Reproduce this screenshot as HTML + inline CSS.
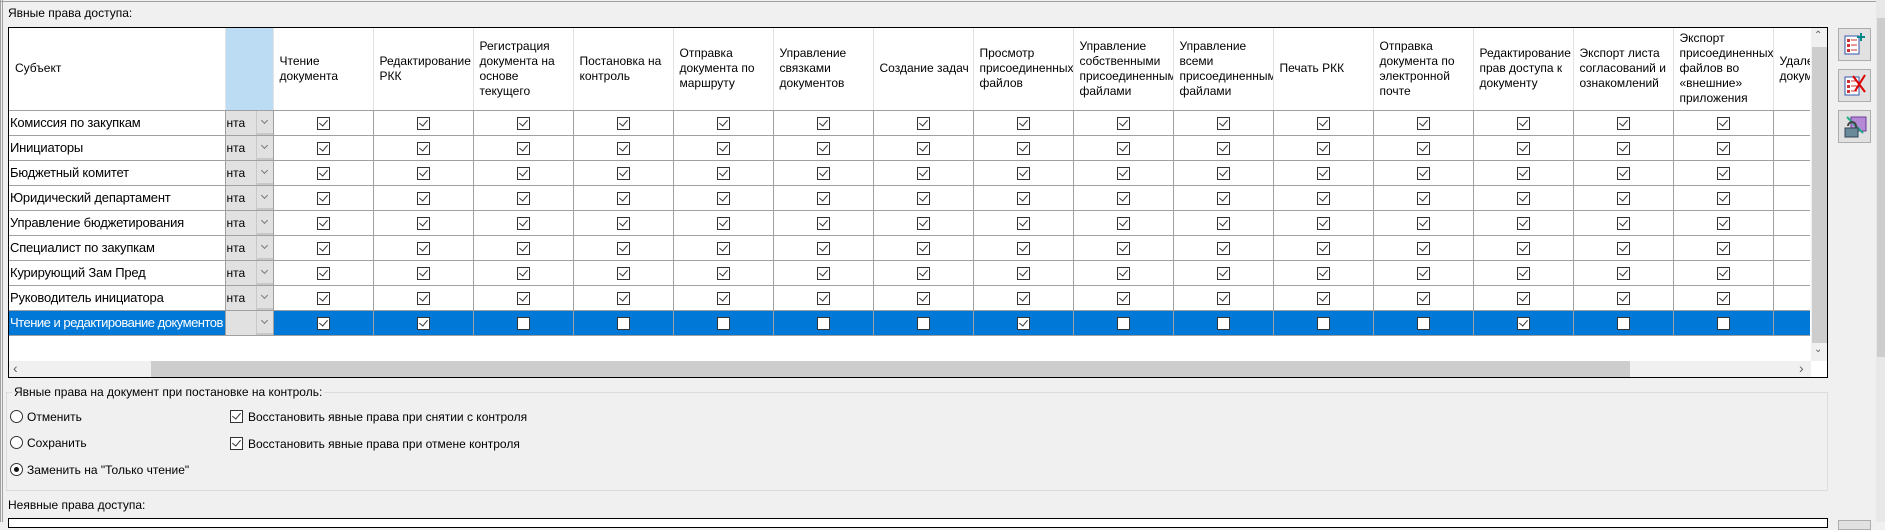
<!DOCTYPE html>
<html><head><meta charset="utf-8"><style>
*{box-sizing:border-box;margin:0;padding:0}
body{width:1885px;height:522px;background:#f0f0f0;font-family:"Liberation Sans",sans-serif;font-size:12px;color:#000;position:relative;overflow:hidden}
.abs{position:absolute}
.grid{position:absolute;left:9px;top:28px;width:1801px;height:333px;overflow:hidden;background:#fff}
table{border-collapse:collapse;table-layout:fixed;width:1816px}
th{height:82px;font-weight:normal;text-align:left;vertical-align:middle;border-right:1px solid #e3e3e3;border-bottom:1px solid #a0a0a0;padding:0 0 0 6px;line-height:15px;overflow:hidden;white-space:nowrap;font-size:12px}
td{height:25px;border-right:1px solid #a0a0a0;border-bottom:1px solid #a0a0a0;text-align:center;vertical-align:middle;padding:0}
td.s{text-align:left;padding-left:1px;white-space:nowrap;overflow:hidden;font-size:13px;letter-spacing:-0.2px}
td.c{background:#e1e1e1;text-align:left;padding:0;position:relative;border-right:1px solid #a0a0a0}
td.c span{position:absolute;left:1px;top:5px;font-size:12px;color:#000}
td.c i{position:absolute;left:30px;top:0;width:17px;height:24px;border-left:1px solid #c8c8c8;border-bottom:2px solid #c8c8c8}
td.c i:after{content:"";position:absolute;left:5px;top:7px;width:4px;height:4px;border-right:1px solid #777;border-bottom:1px solid #777;transform:rotate(45deg)}
.cb{display:inline-block;width:13px;height:13px;border:1px solid #333;background:#fff;vertical-align:middle;position:relative}
.cb.k:after{content:"";position:absolute;left:3px;top:0px;width:4px;height:7px;border-right:1px solid #333;border-bottom:1px solid #333;transform:rotate(40deg)}
tr.sel td{background:#0078d7;color:#fff}
tr.sel td.c{background:#e1e1e1}
tr.sel td.s{letter-spacing:-0.5px}
.btn{position:absolute;left:1838px;width:33px;height:33px;border:1px solid #adadad;background:#e1e1e1}
.radio{position:absolute;width:13px;height:13px;border:1px solid #333;border-radius:50%;background:#fff}
</style></head><body>
<div class="abs" style="left:0;top:0;width:3px;height:522px;border-left:1px solid #a0a0a0;border-right:1px solid #a0a0a0"></div>
<div class="abs" style="left:0;top:1px;width:1876px;height:1px;background:#a0a0a0"></div>
<div class="abs" style="left:8px;top:6px">Явные права доступа:</div>
<div class="abs" style="left:8px;top:27px;width:1820px;height:351px;border:1px solid #000;background:#fff"></div>
<div class="grid"><table>
<colgroup><col style="width:216px"><col style="width:48px"><col span="16" style="width:100px"></colgroup>
<tr><th>Субъект</th><th style="background:#bcdcf4"></th>
<th>Чтение<br>документа</th><th>Редактирование<br>РКК</th><th>Регистрация<br>документа на<br>основе<br>текущего</th><th>Постановка на<br>контроль</th><th>Отправка<br>документа по<br>маршруту</th><th>Управление<br>связками<br>документов</th><th>Создание задач</th><th>Просмотр<br>присоединенных<br>файлов</th><th>Управление<br>собственными<br>присоединенными<br>файлами</th><th>Управление<br>всеми<br>присоединенными<br>файлами</th><th>Печать РКК</th><th>Отправка<br>документа по<br>электронной<br>почте</th><th>Редактирование<br>прав доступа к<br>документу</th><th>Экспорт листа<br>согласований и<br>ознакомлений</th><th>Экспорт<br>присоединенных<br>файлов во<br>«внешние»<br>приложения</th><th>Удаление<br>документа</th></tr>
<tr><td class="s">Комиссия по закупкам</td><td class="c"><span>нта</span><i></i></td><td><b class="cb k"></b></td><td><b class="cb k"></b></td><td><b class="cb k"></b></td><td><b class="cb k"></b></td><td><b class="cb k"></b></td><td><b class="cb k"></b></td><td><b class="cb k"></b></td><td><b class="cb k"></b></td><td><b class="cb k"></b></td><td><b class="cb k"></b></td><td><b class="cb k"></b></td><td><b class="cb k"></b></td><td><b class="cb k"></b></td><td><b class="cb k"></b></td><td><b class="cb k"></b></td><td></td></tr>
<tr><td class="s">Инициаторы</td><td class="c"><span>нта</span><i></i></td><td><b class="cb k"></b></td><td><b class="cb k"></b></td><td><b class="cb k"></b></td><td><b class="cb k"></b></td><td><b class="cb k"></b></td><td><b class="cb k"></b></td><td><b class="cb k"></b></td><td><b class="cb k"></b></td><td><b class="cb k"></b></td><td><b class="cb k"></b></td><td><b class="cb k"></b></td><td><b class="cb k"></b></td><td><b class="cb k"></b></td><td><b class="cb k"></b></td><td><b class="cb k"></b></td><td></td></tr>
<tr><td class="s">Бюджетный комитет</td><td class="c"><span>нта</span><i></i></td><td><b class="cb k"></b></td><td><b class="cb k"></b></td><td><b class="cb k"></b></td><td><b class="cb k"></b></td><td><b class="cb k"></b></td><td><b class="cb k"></b></td><td><b class="cb k"></b></td><td><b class="cb k"></b></td><td><b class="cb k"></b></td><td><b class="cb k"></b></td><td><b class="cb k"></b></td><td><b class="cb k"></b></td><td><b class="cb k"></b></td><td><b class="cb k"></b></td><td><b class="cb k"></b></td><td></td></tr>
<tr><td class="s">Юридический департамент</td><td class="c"><span>нта</span><i></i></td><td><b class="cb k"></b></td><td><b class="cb k"></b></td><td><b class="cb k"></b></td><td><b class="cb k"></b></td><td><b class="cb k"></b></td><td><b class="cb k"></b></td><td><b class="cb k"></b></td><td><b class="cb k"></b></td><td><b class="cb k"></b></td><td><b class="cb k"></b></td><td><b class="cb k"></b></td><td><b class="cb k"></b></td><td><b class="cb k"></b></td><td><b class="cb k"></b></td><td><b class="cb k"></b></td><td></td></tr>
<tr><td class="s">Управление бюджетирования</td><td class="c"><span>нта</span><i></i></td><td><b class="cb k"></b></td><td><b class="cb k"></b></td><td><b class="cb k"></b></td><td><b class="cb k"></b></td><td><b class="cb k"></b></td><td><b class="cb k"></b></td><td><b class="cb k"></b></td><td><b class="cb k"></b></td><td><b class="cb k"></b></td><td><b class="cb k"></b></td><td><b class="cb k"></b></td><td><b class="cb k"></b></td><td><b class="cb k"></b></td><td><b class="cb k"></b></td><td><b class="cb k"></b></td><td></td></tr>
<tr><td class="s">Специалист по закупкам</td><td class="c"><span>нта</span><i></i></td><td><b class="cb k"></b></td><td><b class="cb k"></b></td><td><b class="cb k"></b></td><td><b class="cb k"></b></td><td><b class="cb k"></b></td><td><b class="cb k"></b></td><td><b class="cb k"></b></td><td><b class="cb k"></b></td><td><b class="cb k"></b></td><td><b class="cb k"></b></td><td><b class="cb k"></b></td><td><b class="cb k"></b></td><td><b class="cb k"></b></td><td><b class="cb k"></b></td><td><b class="cb k"></b></td><td></td></tr>
<tr><td class="s">Курирующий Зам Пред</td><td class="c"><span>нта</span><i></i></td><td><b class="cb k"></b></td><td><b class="cb k"></b></td><td><b class="cb k"></b></td><td><b class="cb k"></b></td><td><b class="cb k"></b></td><td><b class="cb k"></b></td><td><b class="cb k"></b></td><td><b class="cb k"></b></td><td><b class="cb k"></b></td><td><b class="cb k"></b></td><td><b class="cb k"></b></td><td><b class="cb k"></b></td><td><b class="cb k"></b></td><td><b class="cb k"></b></td><td><b class="cb k"></b></td><td></td></tr>
<tr><td class="s">Руководитель инициатора</td><td class="c"><span>нта</span><i></i></td><td><b class="cb k"></b></td><td><b class="cb k"></b></td><td><b class="cb k"></b></td><td><b class="cb k"></b></td><td><b class="cb k"></b></td><td><b class="cb k"></b></td><td><b class="cb k"></b></td><td><b class="cb k"></b></td><td><b class="cb k"></b></td><td><b class="cb k"></b></td><td><b class="cb k"></b></td><td><b class="cb k"></b></td><td><b class="cb k"></b></td><td><b class="cb k"></b></td><td><b class="cb k"></b></td><td></td></tr>
<tr class="sel"><td class="s">Чтение и редактирование документов</td><td class="c"><span></span><i></i></td><td><b class="cb k"></b></td><td><b class="cb k"></b></td><td><b class="cb"></b></td><td><b class="cb"></b></td><td><b class="cb"></b></td><td><b class="cb"></b></td><td><b class="cb"></b></td><td><b class="cb k"></b></td><td><b class="cb"></b></td><td><b class="cb"></b></td><td><b class="cb"></b></td><td><b class="cb"></b></td><td><b class="cb k"></b></td><td><b class="cb"></b></td><td><b class="cb"></b></td><td></td></tr>
</table></div>
<div class="abs" style="left:1811px;top:28px;width:16px;height:333px;background:#f0f0f0"></div>
<div class="abs" style="left:1812px;top:47px;width:15px;height:296px;background:#cdcdcd"></div>
<div class="abs" style="left:1814px;top:30px;font-size:10px;color:#606060">&#8963;</div>
<div class="abs" style="left:1814px;top:344px;font-size:10px;color:#606060">&#8964;</div>
<div class="abs" style="left:9px;top:361px;width:1802px;height:16px;background:#f0f0f0"></div>
<div class="abs" style="left:151px;top:361px;width:1479px;height:16px;background:#cdcdcd"></div>
<div class="abs" style="left:13px;top:360px;font-size:14px;color:#606060">&lsaquo;</div>
<div class="abs" style="left:1799px;top:360px;font-size:14px;color:#606060">&rsaquo;</div>
<div class="btn" style="top:28px"><svg width="31" height="31"><rect x="6" y="7" width="14" height="18" fill="#fff" stroke="#3355aa"/><rect x="8" y="10" width="3" height="3" fill="#c33"/><rect x="8" y="15" width="3" height="3" fill="#c33"/><rect x="8" y="20" width="3" height="3" fill="#c33"/><path d="M12 11h6M12 16h6M12 21h6" stroke="#c33"/><path d="M22 4v8M18 8h8" stroke="#088" stroke-width="2"/></svg></div>
<div class="btn" style="top:69px"><svg width="31" height="31"><rect x="6" y="7" width="14" height="18" fill="#fff" stroke="#3355aa"/><rect x="8" y="10" width="3" height="3" fill="#c33"/><rect x="8" y="15" width="3" height="3" fill="#c33"/><rect x="8" y="20" width="3" height="3" fill="#c33"/><path d="M12 11h6M12 16h6M12 21h6" stroke="#c33"/><path d="M14 6l12 16M26 5l-10 16" stroke="#d00" stroke-width="2"/></svg></div>
<div class="btn" style="top:110px"><svg width="31" height="31"><rect x="12" y="6" width="15" height="14" fill="#b48ad6" stroke="#6a3a99"/><path d="M8 6l16 16" stroke="#2a8" stroke-width="2"/><path d="M9 15a4 4 0 0 1 8 0v3" stroke="#444" stroke-width="2" fill="none"/><rect x="6" y="17" width="13" height="9" fill="#6a8a9a" stroke="#345"/></svg></div>
<div class="abs" style="left:1876px;top:0;width:9px;height:522px;background:#e8e8e8"></div>
<div class="abs" style="left:1877px;top:18px;width:8px;height:339px;background:#cdcdcd"></div>
<div class="abs" style="left:6px;top:392px;width:1822px;height:99px;border:1px solid #dcdcdc"></div>
<div class="abs" style="left:12px;top:385px;background:#f0f0f0;padding:0 2px">Явные права на документ при постановке на контроль:</div>
<div class="radio" style="left:10px;top:410px"></div><div class="abs" style="left:27px;top:410px">Отменить</div>
<div class="radio" style="left:10px;top:436px"></div><div class="abs" style="left:27px;top:436px">Сохранить</div>
<div class="radio" style="left:10px;top:463px"><div style="position:absolute;left:3px;top:3px;width:5px;height:5px;border-radius:50%;background:#111"></div></div><div class="abs" style="left:27px;top:463px">Заменить на "Только чтение"</div>
<div class="abs" style="left:230px;top:410px;line-height:0"><b class="cb k"></b></div><div class="abs" style="left:248px;top:410px">Восстановить явные права при снятии с контроля</div>
<div class="abs" style="left:230px;top:437px;line-height:0"><b class="cb k"></b></div><div class="abs" style="left:248px;top:437px">Восстановить явные права при отмене контроля</div>
<div class="abs" style="left:8px;top:498px">Неявные права доступа:</div>
<div class="abs" style="left:8px;top:518px;width:1820px;height:10px;border:1px solid #000;background:#fff"></div>
<div class="abs" style="left:1838px;top:520px;width:33px;height:10px;border:1px solid #adadad;background:#e1e1e1"></div>
</body></html>
